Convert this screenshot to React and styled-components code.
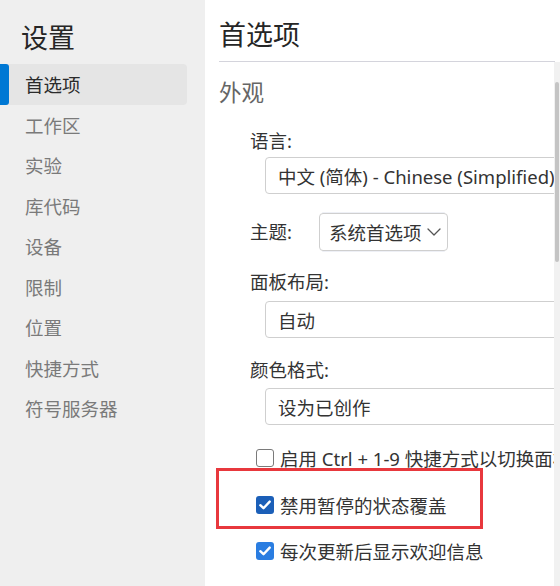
import styled, { createGlobalStyle } from 'styled-components'

const GlobalStyle = createGlobalStyle`
    html, body {
        margin: 0;
        padding: 0;
        background: #ffffff;
    }
    body {
        font-family: "Noto Sans", "Noto Sans CJK SC", sans-serif;
        color: #333333;
    }
`;

const Window = styled.div`
    display: flex;
    width: 560px;
    height: 586px;
    overflow: hidden;
`;

const Sidebar = styled.aside`
    width: 205px;
    flex-shrink: 0;
    background: #efefef;
    padding-top: 20px;
    box-sizing: border-box;
`;

const SidebarTitle = styled.h1`
    margin: 0 0 8px 21px;
    font-size: 27px;
    line-height: 36px;
    font-weight: 400;
    color: #262626;
`;

const NavList = styled.nav`
    display: flex;
    flex-direction: column;
`;

const NavItem = styled.div`
    display: flex;
    align-items: center;
    height: 40.5px;
    width: 187px;
    font-size: 18.5px;
    color: ${({ $active }) => ($active ? '#2b2b2b' : '#7a7a7a')};
    background: ${({ $active }) => ($active ? '#e5e5e5' : 'transparent')};
    border-radius: 0 4px 4px 0;

    &::before {
        content: '';
        width: 9px;
        height: 100%;
        margin-right: 16px;
        border-radius: 0 3px 3px 0;
        background: ${({ $active }) => ($active ? '#0078d4' : 'transparent')};
    }
`;

const Main = styled.main`
    flex: 1;
    display: flex;
    flex-direction: column;
    min-width: 0;
    background: #ffffff;
`;

const Header = styled.header`
    height: 62px;
    margin: 0 5px 0 14px;
    padding-top: 17px;
    box-sizing: border-box;
    border-bottom: 1px solid #d4d4dc;
    font-size: 27px;
    line-height: 36px;
    color: #262626;
`;

const ScrollArea = styled.div`
    flex: 1;
    display: flex;
    min-height: 0;
`;

const Content = styled.div`
    position: relative;
    flex: 1;
    min-width: 0;
    overflow: hidden;
    display: flex;
    flex-direction: column;
    padding-top: 16px;
`;

const Scrollbar = styled.div`
    width: 6px;
    flex-shrink: 0;
    background: #f1f1f1;
    display: flex;
    justify-content: center;
`;

const Thumb = styled.div`
    width: 4px;
    height: 180px;
    margin-top: 20px;
    border-radius: 2px;
    background: #c4c4c4;
`;

const SectionTitle = styled.h2`
    margin: 0 0 0 14px;
    font-size: 22.5px;
    line-height: 30px;
    font-weight: 400;
    color: #666666;
`;

const Field = styled.div`
    display: flex;
    flex-direction: column;
    margin-top: ${({ $top }) => $top}px;
    padding-left: 45px;
`;

const FieldLabel = styled.label`
    font-size: 18.5px;
    line-height: 24px;
    color: #333333;
    margin-bottom: ${({ $gap }) => $gap}px;
    white-space: nowrap;
`;

const SelectBox = styled.div`
    display: flex;
    align-items: center;
    margin-left: 15px;
    width: 340px;
    height: 37px;
    padding-left: 12px;
    box-sizing: border-box;
    border: 1px solid #cfcfcf;
    border-radius: 4px;
    font-size: 18.5px;
    color: #333333;
    white-space: nowrap;
    flex-shrink: 0;
`;

const InlineField = styled.div`
    display: flex;
    align-items: center;
    margin-top: 19px;
    padding-left: 45px;
    gap: 27px;
`;

const InlineSelect = styled.div`
    display: flex;
    align-items: center;
    gap: 6px;
    height: 38px;
    padding: 0 6px 0 9px;
    box-sizing: border-box;
    border: 1px solid #cfcfcf;
    border-radius: 4px;
    font-size: 18.5px;
    color: #333333;
    white-space: nowrap;
    box-shadow: 0 -4px 0 -3px #eef0f6, 0 4px 0 -3px #eef0f6;
`;

const CheckRow = styled.div`
    display: flex;
    align-items: center;
    gap: 6px;
    height: 30px;
    margin-top: ${({ $top }) => $top}px;
    padding-left: 51px;
    font-size: 18.5px;
    color: #333333;
    white-space: nowrap;
`;

const Box = styled.span`
    display: flex;
    align-items: center;
    justify-content: center;
    width: 18px;
    height: 18px;
    flex-shrink: 0;
    box-sizing: border-box;
    border-radius: 3px;
    border: ${({ $color }) => ($color ? 'none' : '1.5px solid #7a7a7a')};
    background: ${({ $color }) => $color || '#ffffff'};
`;

const Highlight = styled.div`
    position: absolute;
    left: 11px;
    top: 406px;
    width: 267px;
    height: 61px;
    box-sizing: border-box;
    border: 3px solid #e8383d;
    pointer-events: none;
`;

function Checkbox ({ color }) {
    return (
        <Box $color={color}>
            {color && (
                <svg width="12" height="10" viewBox="0 0 12 10" fill="none">
                    <path d="M1.3 5.2 L4.5 8.2 L10.7 1.6" stroke="#ffffff" strokeWidth="2.4" strokeLinecap="round" strokeLinejoin="round" />
                </svg>
            )}
        </Box>
    )
}

function Chevron () {
    return (
        <svg width="14" height="8" viewBox="0 0 14 8" fill="none">
            <path d="M1 1 L7 7 L13 1" stroke="#555555" strokeWidth="1.3" strokeLinecap="round" strokeLinejoin="round" />
        </svg>
    )
}

const navItems = ['首选项', '工作区', '实验', '库代码', '设备', '限制', '位置', '快捷方式', '符号服务器']

function App () {
    return (
        <>
            <GlobalStyle />
            <Window>
                <Sidebar>
                    <SidebarTitle>设置</SidebarTitle>
                    <NavList>
                        {navItems.map((item, i) => (
                            <NavItem key={item} $active={i === 0}>{item}</NavItem>
                        ))}
                    </NavList>
                </Sidebar>
                <Main>
                    <Header>首选项</Header>
                    <ScrollArea>
                        <Content>
                            <SectionTitle>外观</SectionTitle>
                            <Field $top={21}>
                                <FieldLabel $gap={4}>语言:</FieldLabel>
                                <SelectBox>中文 (简体) - Chinese (Simplified)</SelectBox>
                            </Field>
                            <InlineField>
                                <FieldLabel $gap={0}>主题:</FieldLabel>
                                <InlineSelect>
                                    系统首选项
                                    <Chevron />
                                </InlineSelect>
                            </InlineField>
                            <Field $top={19}>
                                <FieldLabel $gap={7}>面板布局:</FieldLabel>
                                <SelectBox>自动</SelectBox>
                            </Field>
                            <Field $top={20}>
                                <FieldLabel $gap={6}>颜色格式:</FieldLabel>
                                <SelectBox>设为已创作</SelectBox>
                            </Field>
                            <CheckRow $top={18}>
                                <Checkbox />
                                启用 Ctrl + 1-9 快捷方式以切换面板
                            </CheckRow>
                            <CheckRow $top={16.5}>
                                <Checkbox color="#1b5fb8" />
                                禁用暂停的状态覆盖
                            </CheckRow>
                            <CheckRow $top={16.5}>
                                <Checkbox color="#2a7de1" />
                                每次更新后显示欢迎信息
                            </CheckRow>
                            <Highlight />
                        </Content>
                        <Scrollbar>
                            <Thumb />
                        </Scrollbar>
                    </ScrollArea>
                </Main>
            </Window>
        </>
    )
}

export default App
